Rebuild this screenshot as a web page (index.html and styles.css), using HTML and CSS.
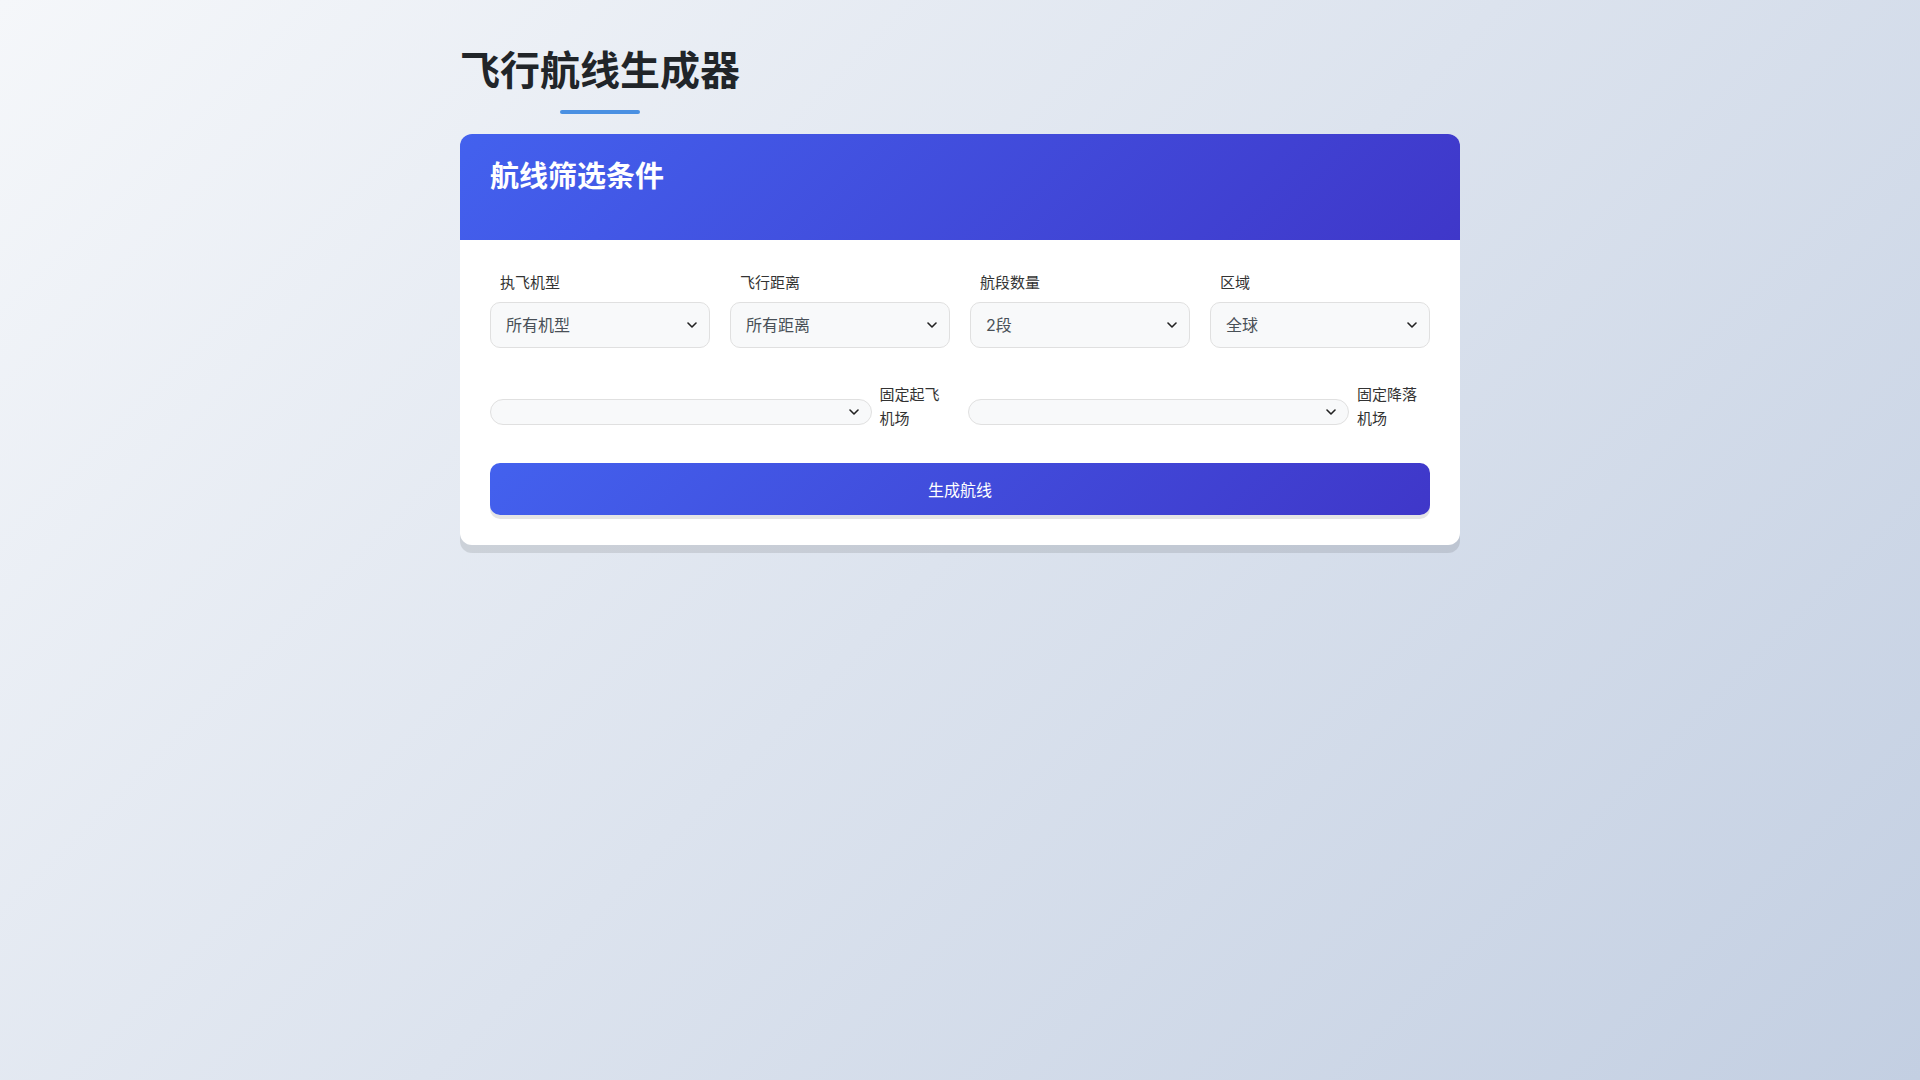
FILE: index.html
```html
<!DOCTYPE html>
<html lang="zh-CN">
  <head>
    <meta charset="UTF-8" />
    <meta name="viewport" content="width=device-width, initial-scale=1.0" />
    <title>飞行航线生成器</title>
    <link rel="stylesheet" href="styles.css">
  </head>
  <body>
    <div class="container">
      <h1 class="pageTitle">飞行航线生成器</h1>

      <div class="filterCard">
        <div class="cardHeader">
          <h2>航线筛选条件</h2>
        </div>

        <div class="cardBody">
          <div class="filterGrid">
            <div class="filterItem">
              <label class="filterLabel" for="aircraft">执飞机型</label>
              <div class="selectWrap">
                <select id="aircraft" class="filterSelect">
                  <option>所有机型</option>
                </select>
                <svg class="chevron" width="10" height="6" viewBox="0 0 10 6"><path d="M1 1l4 4 4-4" /></svg>
              </div>
            </div>
            <div class="filterItem">
              <label class="filterLabel" for="distance">飞行距离</label>
              <div class="selectWrap">
                <select id="distance" class="filterSelect">
                  <option>所有距离</option>
                </select>
                <svg class="chevron" width="10" height="6" viewBox="0 0 10 6"><path d="M1 1l4 4 4-4" /></svg>
              </div>
            </div>
            <div class="filterItem">
              <label class="filterLabel" for="legs">航段数量</label>
              <div class="selectWrap">
                <select id="legs" class="filterSelect">
                  <option>2段</option>
                </select>
                <svg class="chevron" width="10" height="6" viewBox="0 0 10 6"><path d="M1 1l4 4 4-4" /></svg>
              </div>
            </div>
            <div class="filterItem">
              <label class="filterLabel" for="region">区域</label>
              <div class="selectWrap">
                <select id="region" class="filterSelect">
                  <option>全球</option>
                </select>
                <svg class="chevron" width="10" height="6" viewBox="0 0 10 6"><path d="M1 1l4 4 4-4" /></svg>
              </div>
            </div>
          </div>

          <div class="airportRow">
            <div class="airportItem">
              <div class="selectWrap airportWrap">
                <select id="departure" class="airportSelect"></select>
                <svg class="chevron" width="10" height="6" viewBox="0 0 10 6"><path d="M1 1l4 4 4-4" /></svg>
              </div>
              <label class="airportLabel" for="departure">固定起飞机场</label>
            </div>
            <div class="airportItem">
              <div class="selectWrap airportWrap">
                <select id="arrival" class="airportSelect"></select>
                <svg class="chevron" width="10" height="6" viewBox="0 0 10 6"><path d="M1 1l4 4 4-4" /></svg>
              </div>
              <label class="airportLabel" for="arrival">固定降落机场</label>
            </div>
          </div>

          <button type="button" class="generateButton">生成航线</button>
        </div>
      </div>
    </div>
  </body>
</html>
```

FILE: styles.css
```css
* {
  box-sizing: border-box;
}
body {
  margin: 0;
  min-height: 100vh;
  background: linear-gradient(135deg, #f5f7fa 0%, #c3cfe2 100%);
  font-family: "Inter", "Noto Sans CJK SC", sans-serif;
  color: #333;
}
.container {
  max-width: 1000px;
  margin: 0 auto;
  padding-top: 47px;
}
.pageTitle {
  position: relative;
  display: inline-block;
  margin: 0 0 20px;
  padding-bottom: 19px;
  font-size: 40px;
  line-height: 1.2;
  font-weight: 700;
  color: #212529;
}
.pageTitle::after {
  content: "";
  position: absolute;
  left: 50%;
  bottom: 0;
  width: 80px;
  height: 4px;
  margin-left: -40px;
  border-radius: 2px;
  background: #4a90e2;
}
.filterCard {
  background: #fff;
  border-radius: 12px;
  overflow: hidden;
  box-shadow: 0 8px 0 rgba(0, 0, 0, 0.1);
}
.cardHeader {
  padding: 26px 30px 45px;
  background: linear-gradient(135deg, #4361ee 0%, #3f37c9 100%);
}
.cardHeader h2 {
  margin: 0;
  font-size: 29px;
  line-height: 1.2;
  font-weight: 700;
  color: #fff;
}
.cardBody {
  padding: 32px 30px 30px;
}
.filterGrid {
  display: grid;
  grid-template-columns: repeat(4, 1fr);
  gap: 20px;
}
.filterItem {
  display: flex;
  flex-direction: column;
}
.filterLabel {
  padding-left: 10px;
  margin-bottom: 8px;
  font-size: 15px;
  line-height: 1.5;
  color: #333;
}
.selectWrap {
  position: relative;
}
.chevron {
  position: absolute;
  right: 13px;
  top: 50%;
  margin-top: -3px;
  fill: none;
  stroke: #222;
  stroke-width: 1.6;
  stroke-linecap: round;
  stroke-linejoin: round;
  pointer-events: none;
}
.filterSelect {
  display: block;
  width: 100%;
  height: 46px;
  padding: 0 32px 0 15px;
  font-family: inherit;
  font-size: 16px;
  color: #495057;
  background-color: #f8f9fa;
  border: 1px solid #e0e0e0;
  border-radius: 10px;
  appearance: none;
  -webkit-appearance: none;
}
.airportRow {
  display: grid;
  grid-template-columns: 1fr 1fr;
  gap: 15px;
  margin-top: 35px;
}
.airportItem {
  display: flex;
  align-items: center;
  gap: 8px;
}
.airportWrap {
  flex: 1;
  margin-top: 10px;
}
.airportSelect {
  display: block;
  width: 100%;
  height: 26px;
  padding: 0 12px;
  font-family: inherit;
  font-size: 14px;
  background-color: #f8f9fa;
  border: 1px solid #e0e0e0;
  border-radius: 13px;
  appearance: none;
  -webkit-appearance: none;
}
.airportLabel {
  width: 73px;
  flex-shrink: 0;
  font-size: 15px;
  line-height: 24px;
  color: #333;
}
.generateButton {
  display: block;
  width: 100%;
  height: 52px;
  margin-top: 32px;
  font-family: inherit;
  font-size: 16px;
  color: #fff;
  background: linear-gradient(135deg, #4361ee 0%, #3f37c9 100%);
  border: none;
  border-radius: 10px;
  box-shadow: 0 4px 0 rgba(0, 0, 0, 0.1);
  cursor: pointer;
}
```
